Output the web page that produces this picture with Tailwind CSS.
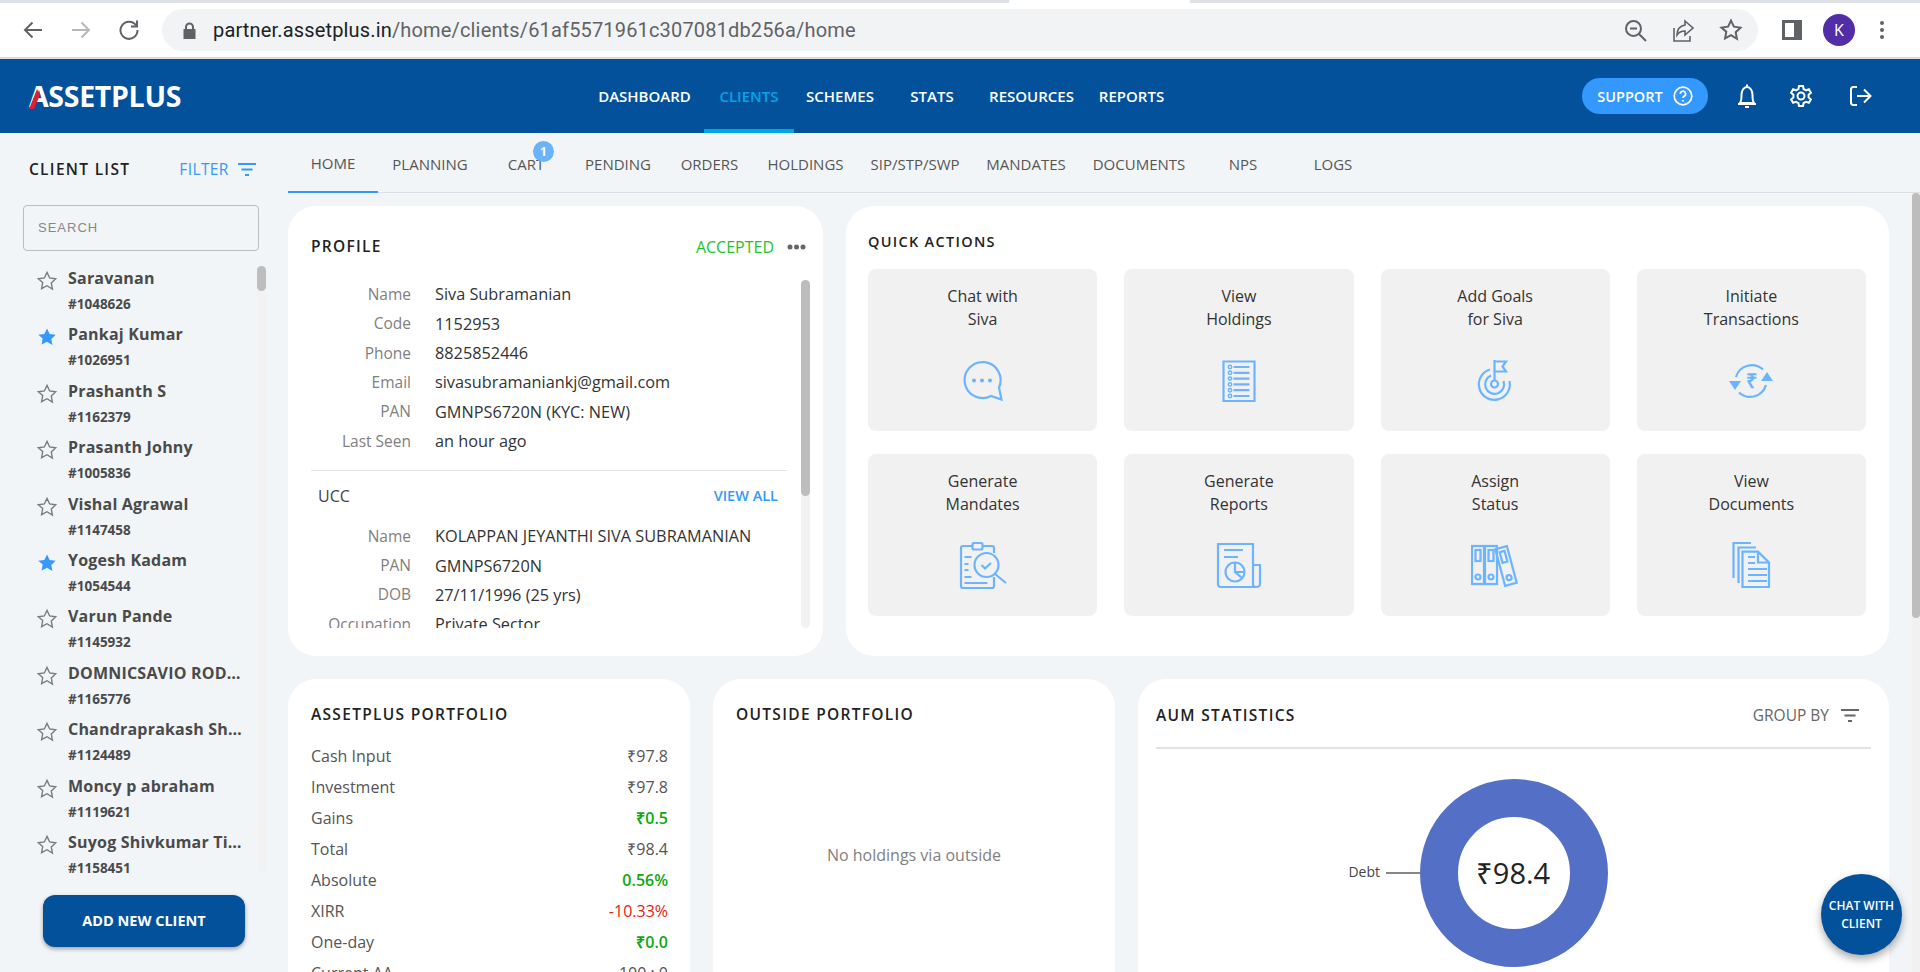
<!DOCTYPE html>
<html lang="en">
<head>
    <meta charset="UTF-8">
    <meta name="viewport" content="width=device-width, initial-scale=1.0">
    <title>AssetPlus Partner - Client Home</title>
    <script src="https://cdn.jsdelivr.net/npm/@tailwindcss/browser@4"></script>
</head>
<body class="relative h-[972px] w-[1920px] overflow-hidden bg-[#f1f5f8] font-['Open_Sans',sans-serif] text-[16px] text-[#333]">
    <svg class="hidden">
        <symbol id="star" viewBox="0 0 24 24"><path d="M12 2.6l2.9 6.1 6.6.9-4.8 4.6 1.2 6.6L12 17.1l-5.900 3.2 1.200-6.600L2.500 9.600l6.600-.9z"/></symbol>
        <symbol id="filter" viewBox="0 0 18 14"><path d="M0 1h18M3.500 6.500h11M7 12h4" fill="none" stroke="currentColor" stroke-width="2"/></symbol>
    </svg>

    <!-- browser chrome -->
    <div class="relative h-[3px] bg-[#dee1e6]"><div class="absolute left-[1009px] top-0 h-[3px] w-[181px] bg-white"></div></div>
    <div class="flex h-[54px] items-center bg-white">
        <div class="flex w-[162px] items-center text-[#5f6368]">
            <svg class="ml-[22px]" width="22" height="22" viewBox="0 0 22 22" fill="none" stroke="currentColor" stroke-width="2"><path d="M20 11H3M10.500 3.500L3 11l7.500 7.500"/></svg>
            <svg class="ml-[26px]" width="22" height="22" viewBox="0 0 22 22" fill="none" stroke="#b5b8bc" stroke-width="2"><path d="M2 11h17M11.500 3.500L19 11l-7.500 7.500"/></svg>
            <svg class="ml-[26px]" width="22" height="22" viewBox="0 0 22 22" fill="none" stroke="currentColor" stroke-width="2"><path d="M18 6.500A8.500 8.500 0 1 0 19.500 11"/><path d="M19 1.500v6h-6"/></svg>
        </div>
        <div class="flex h-[42px] w-[1596px] items-center rounded-full bg-[#f1f3f4] pr-[15px]">
            <svg class="ml-[21px]" width="13" height="17" viewBox="0 0 13 17" fill="#5f6368"><path d="M2 7V5a4.500 4.500 0 0 1 9 0v2h1.500v10H.5V7zm2 0h5V5a2.500 2.500 0 0 0-5 0z"/></svg>
            <div class="ml-[17px] flex-1 font-['Roboto',sans-serif] text-[20px] tracking-[0.16px] text-[#5f6368]"><span class="text-[#202124]">partner.assetplus.in</span>/home/clients/61af5571961c307081db256a/home</div>
            <div class="flex items-center gap-[23px] text-[#5f6368]">
                <svg width="25" height="25" viewBox="0 0 25 25" fill="none" stroke="currentColor" stroke-width="2"><circle cx="10.500" cy="10.500" r="7.500"/><path d="M7 10.500h7M16 16l7 7"/></svg>
                <svg width="25" height="25" viewBox="0 0 25 25" fill="none" stroke="currentColor" stroke-width="1.600"><path d="M3 10v13h16v-5"/><path d="M14 3l8 7-8 7v-4c-4 0-6 1-8 4 0-6 3-9 8-10z"/></svg>
                <svg width="24" height="24" viewBox="0 0 24 24" fill="none" stroke="currentColor" stroke-width="2"><use href="#star"/></svg>
            </div>
        </div>
        <div class="flex flex-1 items-center text-[#5f6368]">
            <svg class="ml-[24px]" width="20" height="20" viewBox="0 0 20 20"><path fill-rule="evenodd" fill="currentColor" d="M0 0h20v20H0zM3 3v14h9V3z"/></svg>
            <div class="ml-[21px] flex h-[32px] w-[32px] items-center justify-center rounded-full bg-[#512da8] text-[16px] text-white">K</div>
            <svg class="ml-[24px]" width="6" height="20" viewBox="0 0 6 20" fill="currentColor"><circle cx="3" cy="3" r="2"/><circle cx="3" cy="10" r="2"/><circle cx="3" cy="17" r="2"/></svg>
        </div>
    </div>
    <div class="h-[2px] bg-[#dadce0]"></div>

    <!-- top nav -->
    <header class="flex h-[74px] items-center bg-[#03519b] text-white">
        <div class="flex h-full w-[585px] items-center pl-[29px]">
            <div class="relative text-[28.5px] leading-none font-bold tracking-[-0.3px]">ASSETPLUS
                <svg class="absolute left-0 top-[7px]" width="14" height="20" viewBox="0 0 14 20"><path d="M8 0L0 20h5l6-14z" fill="#e11d2e"/></svg>
            </div>
        </div>
        <nav class="flex h-full text-[15px] font-semibold">
            <a class="flex w-[119px] items-center justify-center">DASHBOARD</a>
            <a class="flex w-[90px] items-center justify-center border-b-[4px] border-[#00a6e4] pt-[4px] text-[#00a6e4]">CLIENTS</a>
            <a class="flex w-[92px] items-center justify-center">SCHEMES</a>
            <a class="flex w-[92px] items-center justify-center">STATS</a>
            <a class="flex w-[107px] items-center justify-center">RESOURCES</a>
            <a class="flex w-[93px] items-center justify-center">REPORTS</a>
        </nav>
        <div class="ml-[404px] flex h-[36px] w-[126px] items-center justify-center gap-[10px] rounded-full bg-[#3399ff] text-[14.5px] font-semibold">
            <span class="pt-[1px]">SUPPORT</span>
            <svg width="20" height="20" viewBox="0 0 20 20" fill="none" stroke="currentColor" stroke-width="1.700"><circle cx="10" cy="10" r="8.800"/><path d="M7.400 7.800A2.600 2.600 0 1 1 11 10.200c-.8.4-1 .9-1 1.800"/><path d="M10 14v1.400"/></svg>
        </div>
        <svg class="ml-[27px]" width="24" height="26" viewBox="0 0 24 26" fill="none" stroke="currentColor" stroke-width="2"><path d="M5 20c1.500-2 1.500-4 1.500-8S8.500 4 12 4s5.500 4 5.500 8 0 6 1.500 8z"/><path d="M3 21h18M12 1.500V4M10 24h4"/></svg>
        <svg class="ml-[30px]" width="24" height="26" viewBox="0 0 24 24" fill="none" stroke="currentColor" stroke-width="2"><circle cx="12" cy="12" r="3.500"/><path d="M10 2h4l.6 3 2.400 1.300 2.900-1 2 3.400-2.300 2v2.700l2.300 2-2 3.400-2.900-1L14.600 19l-.6 3h-4l-.6-3L7 17.800l-2.900 1-2-3.400 2.300-2v-2.700l-2.300-2 2-3.400 2.900 1L9.400 5z"/></svg>
        <svg class="ml-[35px]" width="24" height="24" viewBox="0 0 24 24" fill="none" stroke="currentColor" stroke-width="2"><path d="M9 3H4.500L3 4.500v15L4.500 21H9"/><path d="M9 12h13M16 5.500l6.500 6.500-6.500 6.500"/></svg>
    </header>

    <div class="flex h-[839px]">
        <!-- client list -->
        <aside class="flex w-[288px] shrink-0 flex-col">
            <div class="flex h-[72px] items-center pt-[2px]">
                <span class="ml-[29px] text-[15.5px] font-semibold tracking-[1.3px] text-[#222]">CLIENT LIST</span>
                <span class="ml-[49px] text-[15.5px] tracking-[0.4px] text-[#3399ff]">FILTER</span>
                <svg class="ml-[9px] text-[#3399ff]" width="18" height="14"><use href="#filter"/></svg>
            </div>
            <div class="ml-[23px] flex h-[46px] w-[236px] items-center rounded-[4px] border border-[#b9bdc0] pl-[14px] font-['Liberation_Sans',sans-serif] text-[13px] tracking-[1px] text-[#888]">SEARCH</div>
            <div class="mt-[15px] flex h-[607px]">
                <ul class="w-[257px] shrink-0 pl-[36px] font-bold text-[#4a4a4a]">
                    <li class="flex h-[56.4px] gap-[10px]"><svg class="mt-[4px] shrink-0" width="22" height="22" fill="none" stroke="#7a7a7a" stroke-width="1.500"><use href="#star"/></svg><div class="w-[178px] min-w-0"><div class="truncate text-[16px] leading-[24px] tracking-[0.2px]">Saravanan</div><div class="text-[13.5px] leading-[28px]">#1048626</div></div></li>
                    <li class="flex h-[56.4px] gap-[10px]"><svg class="mt-[4px] shrink-0" width="22" height="22" fill="#3399ff"><use href="#star"/></svg><div class="w-[178px] min-w-0"><div class="truncate text-[16px] leading-[24px] tracking-[0.2px]">Pankaj Kumar</div><div class="text-[13.5px] leading-[28px]">#1026951</div></div></li>
                    <li class="flex h-[56.4px] gap-[10px]"><svg class="mt-[4px] shrink-0" width="22" height="22" fill="none" stroke="#7a7a7a" stroke-width="1.500"><use href="#star"/></svg><div class="w-[178px] min-w-0"><div class="truncate text-[16px] leading-[24px] tracking-[0.2px]">Prashanth S</div><div class="text-[13.5px] leading-[28px]">#1162379</div></div></li>
                    <li class="flex h-[56.4px] gap-[10px]"><svg class="mt-[4px] shrink-0" width="22" height="22" fill="none" stroke="#7a7a7a" stroke-width="1.500"><use href="#star"/></svg><div class="w-[178px] min-w-0"><div class="truncate text-[16px] leading-[24px] tracking-[0.2px]">Prasanth Johny</div><div class="text-[13.5px] leading-[28px]">#1005836</div></div></li>
                    <li class="flex h-[56.4px] gap-[10px]"><svg class="mt-[4px] shrink-0" width="22" height="22" fill="none" stroke="#7a7a7a" stroke-width="1.500"><use href="#star"/></svg><div class="w-[178px] min-w-0"><div class="truncate text-[16px] leading-[24px] tracking-[0.2px]">Vishal Agrawal</div><div class="text-[13.5px] leading-[28px]">#1147458</div></div></li>
                    <li class="flex h-[56.4px] gap-[10px]"><svg class="mt-[4px] shrink-0" width="22" height="22" fill="#3399ff"><use href="#star"/></svg><div class="w-[178px] min-w-0"><div class="truncate text-[16px] leading-[24px] tracking-[0.2px]">Yogesh Kadam</div><div class="text-[13.5px] leading-[28px]">#1054544</div></div></li>
                    <li class="flex h-[56.4px] gap-[10px]"><svg class="mt-[4px] shrink-0" width="22" height="22" fill="none" stroke="#7a7a7a" stroke-width="1.500"><use href="#star"/></svg><div class="w-[178px] min-w-0"><div class="truncate text-[16px] leading-[24px] tracking-[0.2px]">Varun Pande</div><div class="text-[13.5px] leading-[28px]">#1145932</div></div></li>
                    <li class="flex h-[56.4px] gap-[10px]"><svg class="mt-[4px] shrink-0" width="22" height="22" fill="none" stroke="#7a7a7a" stroke-width="1.500"><use href="#star"/></svg><div class="w-[178px] min-w-0"><div class="truncate text-[16px] leading-[24px] tracking-[0.2px]">DOMNICSAVIO RODRIGUES</div><div class="text-[13.5px] leading-[28px]">#1165776</div></div></li>
                    <li class="flex h-[56.4px] gap-[10px]"><svg class="mt-[4px] shrink-0" width="22" height="22" fill="none" stroke="#7a7a7a" stroke-width="1.500"><use href="#star"/></svg><div class="w-[178px] min-w-0"><div class="truncate text-[16px] leading-[24px] tracking-[0.2px]">Chandraprakash Sharma</div><div class="text-[13.5px] leading-[28px]">#1124489</div></div></li>
                    <li class="flex h-[56.4px] gap-[10px]"><svg class="mt-[4px] shrink-0" width="22" height="22" fill="none" stroke="#7a7a7a" stroke-width="1.500"><use href="#star"/></svg><div class="w-[178px] min-w-0"><div class="truncate text-[16px] leading-[24px] tracking-[0.2px]">Moncy p abraham</div><div class="text-[13.5px] leading-[28px]">#1119621</div></div></li>
                    <li class="flex h-[56.4px] gap-[10px]"><svg class="mt-[4px] shrink-0" width="22" height="22" fill="none" stroke="#7a7a7a" stroke-width="1.500"><use href="#star"/></svg><div class="w-[178px] min-w-0"><div class="truncate text-[16px] leading-[24px] tracking-[0.2px]">Suyog Shivkumar Tiwari</div><div class="text-[13.5px] leading-[28px]">#1158451</div></div></li>
                </ul>
                <div class="w-[9px] rounded-full bg-[#f2f2f2]"><div class="h-[25px] rounded-full bg-[#bdbdbd]"></div></div>
            </div>
            <button class="ml-[43px] mt-[22px] h-[52px] w-[202px] rounded-[12px] bg-[#03519b] text-[14.5px] font-bold text-white shadow-[0_2px_4px_rgba(0,0,0,0.35)]">ADD NEW CLIENT</button>
        </aside>

        <main class="flex min-w-0 flex-1 flex-col">
            <!-- tabs -->
            <div class="relative flex h-[60px] border-b border-[#dcdfe3] text-[15px] text-[#555]">
                <a class="mb-[-1px] flex w-[90px] items-center justify-center border-b-2 border-[#3399ff] pt-[3px]">HOME</a>
                <a class="flex w-[104px] items-center justify-center pt-[4px]">PLANNING</a>
                <a class="relative flex w-[88px] items-center justify-center pt-[4px]">CART
                    <span class="absolute left-[51px] top-[8px] flex h-[21px] w-[21px] items-center justify-center rounded-full bg-[#6cb2f9] text-[12px] font-bold text-white">1</span>
                </a>
                <a class="flex w-[96px] items-center justify-center pt-[4px]">PENDING</a>
                <a class="flex w-[87px] items-center justify-center pt-[4px]">ORDERS</a>
                <a class="flex w-[105px] items-center justify-center pt-[4px]">HOLDINGS</a>
                <a class="flex w-[114px] items-center justify-center pt-[4px]">SIP/STP/SWP</a>
                <a class="flex w-[108px] items-center justify-center pt-[4px]">MANDATES</a>
                <a class="flex w-[118px] items-center justify-center pt-[4px]">DOCUMENTS</a>
                <a class="flex w-[90px] items-center justify-center pt-[4px]">NPS</a>
                <a class="flex w-[90px] items-center justify-center pt-[4px]">LOGS</a>
            </div>

            <div class="flex min-h-0 flex-1">
                <div class="min-w-0 flex-1 overflow-hidden pr-[23px] pt-[13px]">
                    <div class="flex h-[450px] gap-[23px]">
                        <!-- profile -->
                        <section class="w-[535px] shrink-0 rounded-[28px] bg-white pl-[23px] pr-[13px] pt-[29px]">
                            <div class="mb-[21px] flex h-[24px] items-center pr-[4px]">
                                <h2 class="flex-1 text-[15.5px] font-semibold tracking-[1.3px] text-[#222]">PROFILE</h2>
                                <span class="text-[16px] text-[#22c32e]">ACCEPTED</span>
                                <svg class="ml-[13px]" width="19" height="6" viewBox="0 0 19 6" fill="#666"><circle cx="3" cy="3" r="2.500"/><circle cx="9.500" cy="3" r="2.500"/><circle cx="16" cy="3" r="2.500"/></svg>
                            </div>
                            <div class="flex h-[348px] overflow-hidden">
                                <div class="w-[490px] shrink-0">
                                    <dl class="grid grid-cols-[100px_1fr] gap-x-[24px] auto-rows-[29.3px] items-center text-[16.3px]">
                                        <dt class="text-right text-[15.5px] text-[#808080]">Name</dt><dd>Siva Subramanian</dd>
                                        <dt class="text-right text-[15.5px] text-[#808080]">Code</dt><dd>1152953</dd>
                                        <dt class="text-right text-[15.5px] text-[#808080]">Phone</dt><dd>8825852446</dd>
                                        <dt class="text-right text-[15.5px] text-[#808080]">Email</dt><dd>sivasubramaniankj@gmail.com</dd>
                                        <dt class="text-right text-[15.5px] text-[#808080]">PAN</dt><dd>GMNPS6720N (KYC: NEW)</dd>
                                        <dt class="text-right text-[15.5px] text-[#808080]">Last Seen</dt><dd>an hour ago</dd>
                                    </dl>
                                    <div class="mr-[14px] mt-[14px] border-t border-[#e4e4e4]"></div>
                                    <div class="mt-[13px] flex h-[24px] items-center justify-between pl-[7px] pr-[23px]">
                                        <span class="text-[#444]">UCC</span>
                                        <span class="text-[14.5px] font-semibold text-[#3399ff]">VIEW ALL</span>
                                    </div>
                                    <dl class="mt-[14px] grid grid-cols-[100px_1fr] gap-x-[24px] auto-rows-[29.3px] items-center text-[16.3px]">
                                        <dt class="text-right text-[15.5px] text-[#808080]">Name</dt><dd>KOLAPPAN JEYANTHI SIVA SUBRAMANIAN</dd>
                                        <dt class="text-right text-[15.5px] text-[#808080]">PAN</dt><dd>GMNPS6720N</dd>
                                        <dt class="text-right text-[15.5px] text-[#808080]">DOB</dt><dd>27/11/1996 (25 yrs)</dd>
                                        <dt class="text-right text-[15.5px] text-[#808080]">Occupation</dt><dd>Private Sector</dd>
                                    </dl>
                                </div>
                                <div class="h-full w-[9px] shrink-0 rounded-full bg-[#f2f2f2]"><div class="h-[216px] rounded-full bg-[#bdbdbd]"></div></div>
                            </div>
                        </section>

                        <!-- quick actions -->
                        <section class="min-w-0 flex-1 rounded-[28px] bg-white pl-[22px] pr-[23px] pt-[24px]">
                            <h2 class="mb-[15px] flex h-[24px] items-center text-[14.5px] font-semibold tracking-[1.3px] text-[#222]">QUICK ACTIONS</h2>
                            <div class="grid grid-cols-4 gap-x-[27px] gap-y-[23px]">
                                <a class="flex h-[162px] flex-col items-center rounded-[8px] bg-[#f1f1f1] pt-[16px] text-center leading-[22.5px] text-[#333]">
                                    <span class="h-[45px]">Chat with<br>Siva</span>
                                    <svg class="mt-[27px]" width="48" height="48" viewBox="0 0 48 48" fill="none" stroke="#6cb4ff" stroke-width="2.200"><path d="M40 30.500A18 18 0 1 0 32 39L42.500 42.500Z"/><g fill="#6cb4ff" stroke="none"><circle cx="15" cy="23.500" r="2"/><circle cx="23" cy="23.500" r="2"/><circle cx="31" cy="23.500" r="2"/></g></svg>
                                </a>
                                <a class="flex h-[162px] flex-col items-center rounded-[8px] bg-[#f1f1f1] pt-[16px] text-center leading-[22.5px] text-[#333]">
                                    <span class="h-[45px]">View<br>Holdings</span>
                                    <svg class="mt-[27px]" width="48" height="48" viewBox="0 0 48 48" fill="none" stroke="#6cb4ff" stroke-width="2.200"><path d="M8.500 4.500h31V44h-31z"/><path d="M18.500 10h16M18.500 15.800h16M18.500 21.600h16M18.500 27.400h16M18.500 33.200h16M18.500 39h16"/><g stroke-width="1.500"><circle cx="15" cy="10" r="1.700"/><circle cx="15" cy="15.800" r="1.700"/><circle cx="15" cy="21.600" r="1.700"/><circle cx="15" cy="27.400" r="1.700"/><circle cx="15" cy="33.200" r="1.700"/><circle cx="15" cy="39" r="1.700"/></g></svg>
                                </a>
                                <a class="flex h-[162px] flex-col items-center rounded-[8px] bg-[#f1f1f1] pt-[16px] text-center leading-[22.5px] text-[#333]">
                                    <span class="h-[45px]">Add Goals<br>for Siva</span>
                                    <svg class="mt-[27px]" width="48" height="48" viewBox="0 0 48 48" fill="none" stroke="#6cb4ff" stroke-width="2.200"><path d="M19 12.500A15.500 15.500 0 1 0 38.500 24"/><path d="M20 18.500A9.500 9.500 0 1 0 32.500 24"/><circle cx="23.500" cy="27" r="3.500"/><path d="M23.500 3v21M23.500 4.500H35l-3.500 5 3.500 5H23.500"/></svg>
                                </a>
                                <a class="flex h-[162px] flex-col items-center rounded-[8px] bg-[#f1f1f1] pt-[16px] text-center leading-[22.5px] text-[#333]">
                                    <span class="h-[45px]">Initiate<br>Transactions</span>
                                    <svg class="mt-[27px]" width="48" height="48" viewBox="0 0 48 48" fill="none" stroke="#6cb4ff" stroke-width="2.200"><path d="M9 20A16.500 16.500 0 0 1 36 12.500"/><path d="M39 28A16.500 16.500 0 0 1 12 35.500"/><path d="M2 24h12l-6 9zM34 24h12l-6-9z" fill="#6cb4ff" stroke="none"/><text x="24" y="31" text-anchor="middle" font-size="20" font-weight="700" fill="#6cb4ff" stroke="none">₹</text></svg>
                                </a>
                                <a class="flex h-[162px] flex-col items-center rounded-[8px] bg-[#f1f1f1] pt-[16px] text-center leading-[22.5px] text-[#333]">
                                    <span class="h-[45px]">Generate<br>Mandates</span>
                                    <svg class="mt-[27px]" width="48" height="48" viewBox="0 0 48 48" fill="none" stroke="#6cb4ff" stroke-width="2.200"><path d="M13 4H4Q2 4 2 6v38q0 2 2 2h29q2 0 2-2v-9M24 4h9q2 0 2 2v5"/><rect x="13.500" y="1" width="10" height="6.500" rx="1.500"/><circle cx="27.500" cy="23" r="12"/><path d="M36 32l11 9M22.500 23l3.500 3.500 6-5.500M5.500 15h7M5.500 22h4M5.500 28h4M5.500 35h7M5.500 41h23"/></svg>
                                </a>
                                <a class="flex h-[162px] flex-col items-center rounded-[8px] bg-[#f1f1f1] pt-[16px] text-center leading-[22.5px] text-[#333]">
                                    <span class="h-[45px]">Generate<br>Reports</span>
                                    <svg class="mt-[27px]" width="48" height="48" viewBox="0 0 48 48" fill="none" stroke="#6cb4ff" stroke-width="2.200"><path d="M3 2h35v40q0 3 3 3H6q-3 0-3-3zM38 23h7v19q0 3-4 3"/><path d="M9 8h19M9 15h14"/><circle cx="20" cy="30" r="9.500"/><path d="M20 21v9l7 6M20 30h9"/></svg>
                                </a>
                                <a class="flex h-[162px] flex-col items-center rounded-[8px] bg-[#f1f1f1] pt-[16px] text-center leading-[22.5px] text-[#333]">
                                    <span class="h-[45px]">Assign<br>Status</span>
                                    <svg class="mt-[27px]" width="48" height="48" viewBox="0 0 48 48" fill="none" stroke="#6cb4ff" stroke-width="2.200"><rect x="1" y="4" width="12" height="38"/><rect x="14" y="4" width="12" height="38"/><rect x="4.500" y="8" width="5" height="11"/><rect x="17.500" y="8" width="5" height="11"/><circle cx="7" cy="35" r="2.500"/><circle cx="20" cy="35" r="2.500"/><g transform="rotate(-15 35 24)"><rect x="29" y="5" width="12" height="38"/><rect x="32.500" y="9" width="5" height="11"/><circle cx="35" cy="36" r="2.500"/></g></svg>
                                </a>
                                <a class="flex h-[162px] flex-col items-center rounded-[8px] bg-[#f1f1f1] pt-[16px] text-center leading-[22.5px] text-[#333]">
                                    <span class="h-[45px]">View<br>Documents</span>
                                    <svg class="mt-[27px]" width="48" height="48" viewBox="0 0 48 48" fill="none" stroke="#6cb4ff" stroke-width="2.200"><path d="M6.500 36V1H24M11.500 41V5.500H29"/><path d="M15.500 9.700H31L42 20.500V45H15.500zM31 9.700V20.500H42M21 15h7M21 21h7M21 27h19M21 33h19M21 39h19"/></svg>
                                </a>
                            </div>
                        </section>
                    </div>

                    <div class="mt-[23px] flex h-[400px] gap-[23px]">
                        <!-- assetplus portfolio -->
                        <section class="w-[402px] shrink-0 rounded-[28px] bg-white pl-[23px] pr-[22px] pt-[24px] text-[#555]">
                            <h2 class="mb-[14px] flex h-[24px] items-center text-[15.5px] font-semibold tracking-[1.3px] text-[#222]">ASSETPLUS PORTFOLIO</h2>
                            <div class="flex h-[30.9px] items-center justify-between"><span>Cash Input</span><span>₹97.8</span></div>
                            <div class="flex h-[30.9px] items-center justify-between"><span>Investment</span><span>₹97.8</span></div>
                            <div class="flex h-[30.9px] items-center justify-between"><span>Gains</span><span class="font-semibold text-[#0fa80f]">₹0.5</span></div>
                            <div class="flex h-[30.9px] items-center justify-between"><span>Total</span><span>₹98.4</span></div>
                            <div class="flex h-[30.9px] items-center justify-between"><span>Absolute</span><span class="font-semibold text-[#0fa80f]">0.56%</span></div>
                            <div class="flex h-[30.9px] items-center justify-between"><span>XIRR</span><span class="text-[#e8200f]">-10.33%</span></div>
                            <div class="flex h-[30.9px] items-center justify-between"><span>One-day</span><span class="font-semibold text-[#0fa80f]">₹0.0</span></div>
                            <div class="flex h-[30.9px] items-center justify-between"><span>Current AA</span><span>100 : 0</span></div>
                        </section>

                        <!-- outside portfolio -->
                        <section class="flex w-[402px] shrink-0 flex-col rounded-[28px] bg-white px-[23px] pt-[24px]">
                            <h2 class="flex h-[24px] items-center text-[15.5px] font-semibold tracking-[1.3px] text-[#222]">OUTSIDE PORTFOLIO</h2>
                            <p class="mt-[116px] text-center text-[#808080]">No holdings via outside</p>
                        </section>

                        <!-- aum statistics -->
                        <section class="min-w-0 flex-1 rounded-[28px] bg-white px-[18px] pt-[25px]">
                            <div class="flex h-[24px] items-center">
                                <h2 class="flex-1 text-[15.5px] font-semibold tracking-[1.3px] text-[#222]">AUM STATISTICS</h2>
                                <span class="text-[15.5px] text-[#666]">GROUP BY</span>
                                <svg class="ml-[12px] mr-[12px] text-[#666]" width="18" height="14"><use href="#filter"/></svg>
                            </div>
                            <div class="mt-[19px] border-t-2 border-[#e2e2e2]"></div>
                            <div class="mt-[29px] flex justify-center">
                                <svg width="400" height="190" viewBox="-200 -95 400 190">
                                    <circle r="75" fill="none" stroke="#5470c6" stroke-width="38"/>
                                    <path d="M-128 0h34" stroke="#111" stroke-width="1.200"/>
                                    <text x="-134" y="4" text-anchor="end" font-size="14" fill="#444">Debt</text>
                                    <text x="-1" y="11" text-anchor="middle" font-size="29" fill="#222">₹98.4</text>
                                </svg>
                            </div>
                        </section>
                    </div>
                </div>
                <!-- page scrollbar -->
                <div class="w-[8px] shrink-0 bg-[#f1f1f1]"><div class="h-[425px] rounded-full bg-[#bdbdbd]"></div></div>
            </div>
        </main>
    </div>

    <button class="absolute left-[1821px] top-[874px] flex h-[81px] w-[81px] items-center justify-center rounded-full bg-[#03519b] text-[12px] leading-[18px] font-semibold text-white shadow-[0_4px_8px_rgba(0,0,0,0.35)]">CHAT WITH<br>CLIENT</button>
</body>
</html>
